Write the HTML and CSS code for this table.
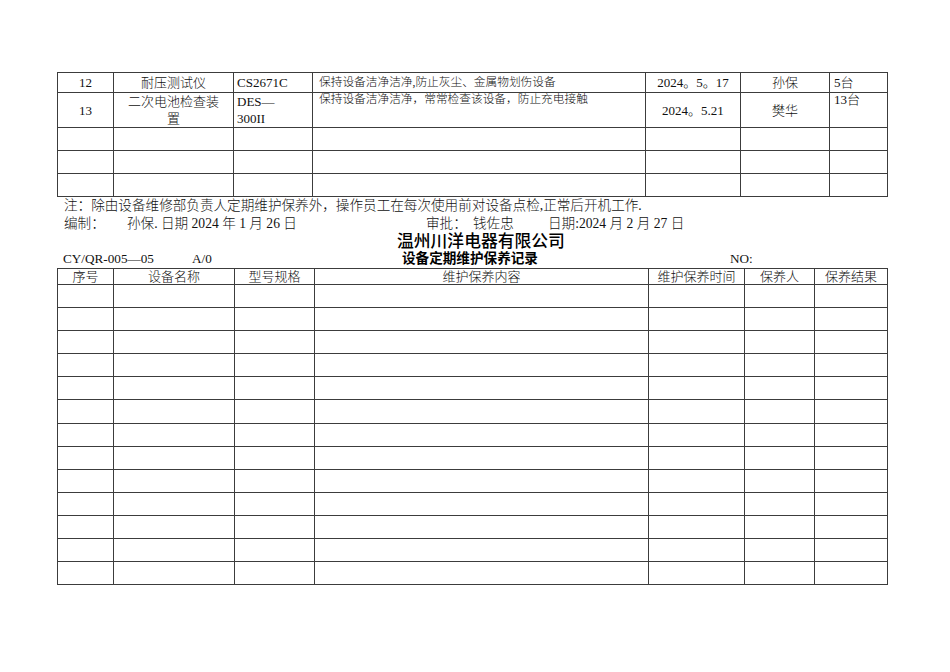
FILE: index.html
```html
<!DOCTYPE html>
<html lang="zh-CN">
<head>
<meta charset="utf-8">
<title>设备定期维护保养记录</title>
<link rel="stylesheet" href="styles.css">
</head>
<body>
<div class="page">
  <table class="grid top">
    <colgroup>
      <col class="w1"><col class="w2"><col class="w3"><col class="w4"><col class="w5"><col class="w6"><col class="w7">
    </colgroup>
    <tr class="r-a">
      <td class="ctr">12</td>
      <td class="ctr">耐压测试仪</td>
      <td class="lft">CS2671C</td>
      <td class="txt">保持设备洁净洁净,防止灰尘、金属物划伤设备</td>
      <td class="ctr">2024。5。17</td>
      <td class="ctr">孙保</td>
      <td class="qty">5台</td>
    </tr>
    <tr class="r-b">
      <td class="ctr">13</td>
      <td class="ctr">二次电池检查装<br>置</td>
      <td class="lft">DES—<br>300II</td>
      <td class="txt topal">保持设备洁净洁净，常常检查该设备，防止充电接触</td>
      <td class="ctr">2024。5.21</td>
      <td class="ctr">樊华</td>
      <td class="qty topal">13台</td>
    </tr>
    <tr class="r-e"><td></td><td></td><td></td><td></td><td></td><td></td><td></td></tr>
    <tr class="r-e"><td></td><td></td><td></td><td></td><td></td><td></td><td></td></tr>
    <tr class="r-e"><td></td><td></td><td></td><td></td><td></td><td></td><td></td></tr>
  </table>

  <div class="note">注：除由设备维修部负责人定期维护保养外，操作员工在每次使用前对设备点检,正常后开机工作.</div>
  <div class="sign">
    <span class="s-lab">编制：</span>
    <span class="s-name">孙保. 日期 2024 年 1 月 26 日</span>
    <span class="s-lab2">审批：</span>
    <span class="s-name2">钱佐忠</span>
    <span>日期:2024 月 2 月 27 日</span>
  </div>
  <div class="company">温州川洋电器有限公司</div>
  <div class="formline">
    <span class="code">CY/QR-005—05</span>
    <span class="ver">A/0</span>
    <span class="form-title">设备定期维护保养记录</span>
    <span class="no">NO:</span>
  </div>

  <table class="grid bottom">
    <colgroup>
      <col class="v1"><col class="v2"><col class="v3"><col class="v4"><col class="v5"><col class="v6"><col class="v7">
    </colgroup>
    <tr class="head">
      <td>序号</td><td>设备名称</td><td>型号规格</td><td>维护保养内容</td><td>维护保养时间</td><td>保养人</td><td>保养结果</td>
    </tr>
    <tr class="r-e"><td></td><td></td><td></td><td></td><td></td><td></td><td></td></tr>
    <tr class="r-e"><td></td><td></td><td></td><td></td><td></td><td></td><td></td></tr>
    <tr class="r-e"><td></td><td></td><td></td><td></td><td></td><td></td><td></td></tr>
    <tr class="r-e"><td></td><td></td><td></td><td></td><td></td><td></td><td></td></tr>
    <tr class="r-e"><td></td><td></td><td></td><td></td><td></td><td></td><td></td></tr>
    <tr class="r-e"><td></td><td></td><td></td><td></td><td></td><td></td><td></td></tr>
    <tr class="r-e"><td></td><td></td><td></td><td></td><td></td><td></td><td></td></tr>
    <tr class="r-e"><td></td><td></td><td></td><td></td><td></td><td></td><td></td></tr>
    <tr class="r-e"><td></td><td></td><td></td><td></td><td></td><td></td><td></td></tr>
    <tr class="r-e"><td></td><td></td><td></td><td></td><td></td><td></td><td></td></tr>
    <tr class="r-e"><td></td><td></td><td></td><td></td><td></td><td></td><td></td></tr>
    <tr class="r-e"><td></td><td></td><td></td><td></td><td></td><td></td><td></td></tr>
    <tr class="r-e"><td></td><td></td><td></td><td></td><td></td><td></td><td></td></tr>
  </table>
</div>
</body>
</html>
```

FILE: styles.css
```css
html, body {
  margin: 0;
  background: #ffffff;
}

body {
  color: #111111;
  font-family: "Liberation Serif", "Noto Sans CJK SC", serif;
  font-weight: 300;
}

.page {
  padding: 72px 0 0 57px;
  width: 830px;
}

.grid {
  border-collapse: collapse;
  table-layout: fixed;
  width: 830px;
}

.grid td {
  border: 1px solid #3c3c3c;
  padding: 0 3px;
  font-size: 13px;
  line-height: 17px;
  white-space: nowrap;
  overflow: hidden;
  vertical-align: middle;
}

/* top table columns */
.w1 { width: 56px; }
.w2 { width: 120px; }
.w3 { width: 79px; }
.w4 { width: 333px; }
.w5 { width: 95px; }
.w6 { width: 89px; }
.w7 { width: 58px; }

/* bottom table columns */
.v1 { width: 56px; }
.v2 { width: 121px; }
.v3 { width: 80px; }
.v4 { width: 334px; }
.v5 { width: 96px; }
.v6 { width: 70px; }
.v7 { width: 73px; }

.grid .ctr { text-align: center; }
.grid .lft { text-align: left; padding-left: 3px; }
.grid .txt { text-align: left; padding-left: 6px; font-size: 11.7px; }
.grid .qty { text-align: left; padding-left: 4px; }
.grid .topal { vertical-align: top; line-height: 13px; padding-top: 0; }

.top .r-a { height: 20px; }
.top .r-b { height: 33px; }
.top .r-e { height: 23px; }

.bottom .head { height: 16px; }
.bottom .head td {
  text-align: center;
  line-height: 15px;
  font-size: 13px;
}
.bottom .r-e { height: 23.1px; }

.note {
  padding-left: 7px;
  font-size: 13.6px;
  line-height: 18px;
  white-space: nowrap;
}

.sign {
  display: flex;
  padding-left: 7px;
  font-size: 13.6px;
  line-height: 18px;
  white-space: nowrap;
}
.s-lab { width: 63px; }
.s-name { width: 299px; }
.s-lab2 { width: 47px; }
.s-name2 { width: 75px; }

.company {
  padding-left: 340px;
  font-family: "Liberation Sans", "Noto Sans CJK SC", sans-serif;
  font-weight: 500;
  font-size: 16.8px;
  line-height: 17px;
  color: #000;
}

.formline {
  display: flex;
  align-items: center;
  padding-left: 6px;
  height: 18px;
  font-size: 13.2px;
  white-space: nowrap;
}
.code { width: 129px; }
.ver { width: 210px; }
.form-title {
  width: 328px;
  font-family: "Liberation Sans", "Noto Sans CJK SC", sans-serif;
  font-weight: 700;
  font-size: 13.6px;
  line-height: 16px;
  color: #000;
}
.no { font-size: 13.2px; }
```
